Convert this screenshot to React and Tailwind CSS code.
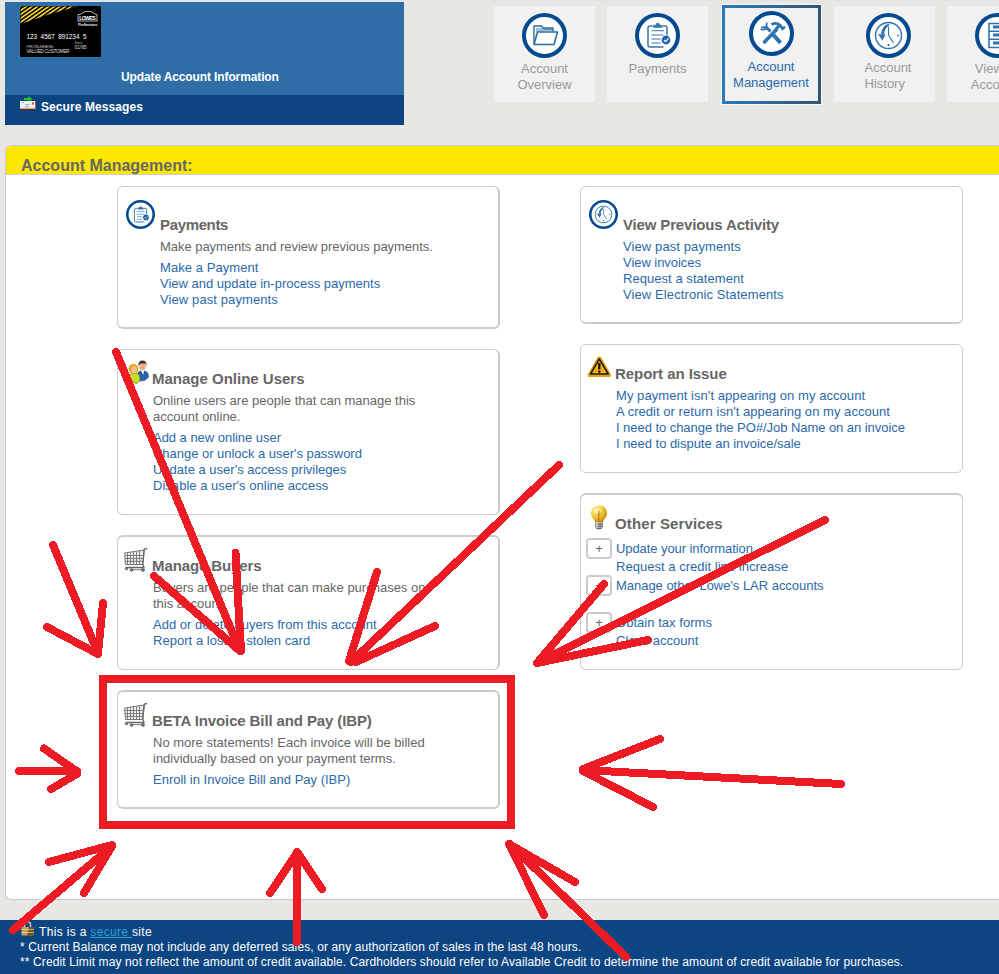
import React from 'react';
import clsx from 'clsx';

function CreditCardArt() {
  return (
    <svg width="81" height="51" viewBox="0 0 81 51" className="block font-['Liberation_Sans',Arial,sans-serif] font-normal tracking-normal">
      <defs>
        <pattern id="stripes" width="3.2" height="10" patternUnits="userSpaceOnUse" patternTransform="rotate(55)">
          <rect width="1.7" height="10" fill="#f0cf35" />
        </pattern>
      </defs>
      <rect width="81" height="51" rx="1.5" fill="#000" />
      <path d="M0.5 0.5H57L30 8L0.5 18z" fill="url(#stripes)" />
      <path d="M58 17.5V8.5h2l5-3h6l5 3h1v9z" fill="#000" stroke="#ddd" strokeWidth="0.8" />
      <text x="59.3" y="14" fontSize="5.2" fontWeight="700" fill="#fff" textLength="16.5">LOWE'S</text>
      <rect x="57" y="15.2" width="22" height="5.5" fill="#000" />
      <path d="M58 15h19" stroke="#ddd" strokeWidth="0.8" />
      <text x="58" y="19.6" fontSize="4.2" fontWeight="700" fill="#ddd" textLength="19.5">ProServices</text>
      <text x="6.500" y="32.800" fontSize="6.400" fill="#fff" xmlSpace="preserve" textLength="60">123  4567  891234  5</text>
      <text x="6.5" y="42" fontSize="4.4" fill="#bbb" textLength="27">PRO BUSINESS</text>
      <text x="54.5" y="38" fontSize="3.6" fill="#aaa" textLength="8">Since</text>
      <text x="54.5" y="43" fontSize="4.8" fill="#ddd" textLength="12">01/95</text>
      <text x="6.5" y="47" fontSize="4.8" fill="#ddd" textLength="43">VALUED CUSTOMER</text>
    </svg>
  );
}

function EnvelopeIcon() {
  return (
    <svg width="16" height="15" viewBox="0 0 16 15" className="block">
      <path d="M0 5h15v8H0z" fill="#eef0f2" />
      <path d="M0 13h16v1.5H0z" fill="#4d2b2b" />
      <path d="M0 11.8h15V13H0z" fill="#d8a9a0" />
      <path d="M15 5h1v9h-1z" fill="#7b6b6b" />
      <path d="M5 8.5h5M5 10.5h4M2 6.5h2" stroke="#9aa4b0" strokeWidth="0.8" />
      <path d="M12 6.5h2v2h-2z" fill="#e0452f" />
      <path d="M4 2h4V0l4.5 3L8 6V4H4z" fill="#23c523" />
    </svg>
  );
}

function Badge({ size, children }) {
  return (
    <svg width={size} height={size} viewBox="0 0 45 45" className="block shrink-0">
      <circle cx="22.5" cy="22.5" r="20.5" fill="#fff" stroke="#034a90" strokeWidth="4" />
      {children}
    </svg>
  );
}

function FolderGlyph() {
  return (
    <g fill="none" stroke="#2a6ea9" strokeWidth="1.4" strokeLinejoin="round">
      <path d="M12 31V13h7.500l1.500 2h10v3.500" />
      <path d="M12 31.500l3.500-12.500h20L32 31.500H12z" strokeWidth="1.600" />
      <path d="M14 16h16M14 18h6.500l1-1h10" strokeWidth="0.9" />
    </g>
  );
}

function ClipboardGlyph() {
  return (
    <g fill="none" stroke="#3476b0" strokeWidth="1.5">
      <path d="M28.500 34H15q-2 0-2-2V15q0-2 2-2h2.500M27.500 13h2.500q2 0 2 2v7" />
      <path d="M18.500 14.500v-2.300h2.400q.3-2.200 1.900-2.200t1.900 2.200h2.300v2.300z" fill="#3476b0" strokeWidth="0.6" />
      <path d="M16.500 17.700h12.500M16.500 22h12M16.500 26h9M16.500 30h9" strokeWidth="1" />
      <circle cx="31" cy="27" r="4.400" fill="#1f65a6" stroke="none" />
      <path d="M29 27l1.600 1.600 3-3.300" stroke="#fff" strokeWidth="1.100" />
    </g>
  );
}

function ToolsGlyph() {
  return (
    <g stroke="#2e73ae" fill="none">
      <path d="M17 16l4.500 4.500" strokeWidth="3" />
      <path d="M17.500 11.500q.8 3-.8 4.200-1.700 1-4.600.3M11.500 18q3 1.500 5.800-.5" strokeWidth="1.800" />
      <path d="M24.500 24l7 7.800" strokeWidth="4" />
      <path d="M28 18L14.500 32" strokeWidth="3.600" />
      <path d="M22.500 13.500q4.500-2.500 8.500.500l2.500 3.800 2.500-2" strokeWidth="2.600" />
      <path d="M30.500 14l-4 5" strokeWidth="3.200" />
    </g>
  );
}

function HistoryGlyph() {
  return (
    <g fill="none" stroke="#2e73ae">
      <circle cx="22.5" cy="22.5" r="13" strokeWidth="1.4" />
      <path d="M23.5 11.500q-6 1-7.800 9.500" strokeWidth="1.3" />
      <path d="M21 12.500q-4 3-4.200 9" strokeWidth="2.600" />
      <path d="M12 21.200h7.500l-3 6.200z" fill="#2e73ae" stroke="none" />
      <path d="M22.5 13.500v8.500l5 8" strokeWidth="1.1" />
      <path d="M31.200 22.500h1.800M22.500 31v2" strokeWidth="1.7" />
    </g>
  );
}

function CabinetGlyph() {
  return (
    <g fill="none" stroke="#2e73ae" strokeWidth="1.6">
      <path d="M14 10.5h17v24H14zM14 18.3h17M14 26.2h17" />
      <path d="M18 14h9M18 22h9M18 30h9" strokeWidth="3" />
    </g>
  );
}

function UsersIcon() {
  return (
    <svg width="22" height="24" viewBox="0 0 22 24" className="block">
      <path d="M10 20q-1-7 3-9h5q3.5 1 3.5 6l-3 3-5 1z" fill="#2763b5" stroke="#173b6e" strokeWidth="0.6" />
      <path d="M14 10l2 5 1.5-5z" fill="#fff" />
      <ellipse cx="15.5" cy="6" rx="3.3" ry="4.3" fill="#e8b184" />
      <path d="M11.5 6Q11 .5 15.5.5T19.5 6l-1-2.5h-5z" fill="#3e342f" />
      <path d="M2 22q-.5-8 4-9h4q3.5 2 3 7l-3 3.5z" fill="#c7dc28" stroke="#66751a" strokeWidth="0.6" />
      <circle cx="6.5" cy="9" r="5" fill="#e5a71d" />
      <ellipse cx="7" cy="9.7" rx="2.8" ry="3.4" fill="#f4c491" />
    </svg>
  );
}

function CartIcon() {
  return (
    <svg width="24" height="25" viewBox="0 0 24 25" className="block">
      <g fill="none" stroke="#666">
        <path d="M.6 6L19.800 3 18.800 17.500H1.500L.6 6z" fill="#eee" strokeWidth="0.9" />
        <path d="M3.500 6v11M6.500 5.500V17M9.500 5v12M12.500 4.500V17M15.500 4v13M1 8.500h18M1 11.500h18M1.500 14.400h17" strokeWidth="0.8" />
        <path d="M23.200 1.500l-2.800.5-1.600 15.200 1.200 3.300H3" strokeWidth="1.3" />
      </g>
      <g fill="#888" stroke="#444" strokeWidth="0.7">
        <circle cx="2.5" cy="21.5" r="1.300" />
        <circle cx="7.5" cy="23" r="1.300" />
        <circle cx="19" cy="23" r="1.400" />
        <path d="M8 22.700h10" />
      </g>
    </svg>
  );
}

function WarningIcon() {
  return (
    <svg width="25" height="22" viewBox="0 0 25 22" className="block">
      <path d="M12 .5q1.200-.5 2.200 1l9.800 17q.3 2.500-1.500 2.500H2Q0 20.500.7 18.500L10.500 1.500q.6-1 1.500-1z" fill="#dfa012" />
      <path d="M12.200 3L3.500 18h17.800z" fill="#eeb01d" stroke="#241c08" strokeWidth="1.500" strokeLinejoin="round" />
      <path d="M12.300 7v6.500" stroke="#111" strokeWidth="2.200" />
      <circle cx="12.300" cy="15.700" r="1.200" fill="#111" />
    </svg>
  );
}

function BulbIcon() {
  return (
    <svg width="18" height="25" viewBox="0 0 18 25" className="block">
      <defs>
        <radialGradient id="glow" cx="0.35" cy="0.3" r="0.75">
          <stop offset="0" stopColor="#fffbd0" />
          <stop offset="0.45" stopColor="#f6d23a" />
          <stop offset="1" stopColor="#c07f07" />
        </radialGradient>
      </defs>
      <path d="M9 .5q8 .5 8 8 0 3-2.500 5.500-1.500 1.500-1.500 3.500H5q0-2-1.500-3.500Q1 11.500 1 8.500 1 1 9 .5z" fill="url(#glow)" />
      <path d="M6.500 9l2 1.500.5 6M11 8.500l-2 2V6" fill="none" stroke="#9b680f" strokeWidth="0.800" />
      <path d="M5 17.500h8v4.500q-1 2.500-4 2.500T5 22z" fill="#aaa" />
      <path d="M5 19h8M5 21.200h8M6.500 23.500h5" stroke="#555" strokeWidth="0.800" />
      <path d="M7 17.500v5" stroke="#eee" strokeWidth="1.200" />
    </svg>
  );
}

function LockIcon() {
  return (
    <svg width="13" height="15" viewBox="0 0 13 15" className="block">
      <path d="M3.500 6.500V3.500Q3.500 1 6.500 1t3 2.500v3" fill="none" stroke="#bfc3c8" strokeWidth="1.500" />
      <path d="M.5 6h12v8.500H.5z" fill="#c3a052" />
      <path d="M8 6h4.500v8.500H6z" fill="#6f5320" />
      <path d="M.5 8.500h12M.5 11.500h12" stroke="#eed99d" strokeWidth="0.700" />
    </svg>
  );
}

const NAV = [
  { lines: ['Account', 'Overview'], glyph: <FolderGlyph /> },
  { lines: ['Payments'], glyph: <ClipboardGlyph />, className: 'mr-px' },
  { lines: ['Account', 'Management'], glyph: <ToolsGlyph />, active: true },
  { lines: ['Account', 'History'], glyph: <HistoryGlyph />, left: true, className: 'pl-[7px]' },
  { lines: ['View All', 'Accounts'], glyph: <CabinetGlyph /> },
];

function NavTile({ lines, glyph, active, left, className }) {
  const label = (
    <div className={clsx('leading-4', left ? 'mt-[2px] text-left' : 'mt-[3px] text-center')}>
      {lines.map((line) => (
        <div key={line} className="whitespace-nowrap">{line}</div>
      ))}
    </div>
  );

  if (active) {
    return (
      <div className="-mt-[2px] h-[101px] w-[101px] shrink-0 border border-[#f5f8fa] bg-gradient-to-r from-[#2b78bf] to-[#305672] p-[3px]">
        <div className="flex h-full flex-col items-center bg-[#f1f1f1] pt-[3px] pr-px text-[#2a69a8]">
          <Badge size={45}>{glyph}</Badge>
          {label}
        </div>
      </div>
    );
  }

  return (
    <div className={clsx('flex h-24 w-[101px] shrink-0 flex-col items-center bg-[#f1f1f1] pt-[7px] text-[#999]', className)}>
      <Badge size={45}>{glyph}</Badge>
      {label}
    </div>
  );
}

function Card({ title, titleClass, icon, iconClass, wide, className, children }) {
  return (
    <section className={clsx('flex w-[383px] rounded-md border-[#ccc] bg-white', className)}>
      <div className={clsx('shrink-0', wide ? 'w-[42px]' : 'w-[35px]', iconClass)}>{icon}</div>
      <div className={wide ? 'pt-[28px]' : 'pt-[19px]'}>
        <h2 className={clsx('mb-1 text-[15px] leading-5 font-bold', titleClass)}>{title}</h2>
        {children}
      </div>
    </section>
  );
}

function Links({ items, className }) {
  return (
    <ul className={clsx('text-[#2b69a9]', className)}>
      {items.map(({ label, tracking }) => (
        <li key={label} className={clsx('whitespace-nowrap', tracking)}>{label}</li>
      ))}
    </ul>
  );
}

function ServiceRow({ label, expandable, tracking }) {
  return (
    <div className={clsx('-ml-[30px] flex items-center', expandable ? 'h-[21px]' : 'h-4')}>
      {expandable ? (
        <span className="mr-1 flex h-[21px] w-[26px] items-center justify-center rounded border-2 border-[#ccc] text-[#666]">+</span>
      ) : (
        <span className="w-[30px]" />
      )}
      <span className={clsx('whitespace-nowrap text-[#2b69a9]', tracking)}>{label}</span>
    </div>
  );
}

// Hand-drawn red pen marks: each arrow is a shaft plus two barbs meeting at the tip
const ARROWS = [
  'M116 352L240 651M154 576L240 651M235.500 553L241 651',
  'M559 465L351 662M377 572L349 661M435 626L356 662',
  'M825 520L537 663M604 584L537 663M648 640L537 663',
  'M53 545L98 653M47 627L98 654M103 603L98 653',
  'M19 771H77M44 748.500L77 771.500M51 789L77 774',
  'M13 930L112 846M49 862L112 845M84 893L112 846',
  'M297 942V852M270 893L297 853M322 889L298 853',
  'M626 957L510 844M575 882L509 844M544 915L509 844',
  'M841 784L583 770M660 739L583 769M653 807L583 771',
];

function PenMarks() {
  return (
    <svg
      width="999"
      height="974"
      className="pointer-events-none absolute top-0 left-0"
      shapeRendering="crispEdges"
      fill="none"
      stroke="#ed1c24"
      strokeWidth="8"
    >
      <rect x="103" y="679" width="408" height="146" />
      {ARROWS.map((d) => (
        <path key={d} d={d} strokeLinecap="round" />
      ))}
    </svg>
  );
}

export default function App() {
  return (
    <div className="relative flex h-[974px] w-[999px] flex-col overflow-hidden bg-[#e8e7e3] font-['Liberation_Sans',Arial,sans-serif] text-[13px] leading-4 text-[#666]">
      <header className="flex h-[145px] shrink-0 border-t border-[#dce4e6] pl-[5px]">
        <div className="mt-px h-[123px] w-[399px] shrink-0 text-[12px] font-bold text-white">
          <div className="h-[93px] bg-[#2e6da6] pt-1 pl-[15px]">
            <CreditCardArt />
            <div className="mt-[12px] ml-[101px] tracking-[-0.12px]">Update Account Information</div>
          </div>
          <div className="flex h-[30px] bg-[#0d4583] pt-px pl-[15px]">
            <EnvelopeIcon />
            <div className="mt-[3px] ml-[5px] tracking-[0.08px]">Secure Messages</div>
          </div>
        </div>
        <nav className="ml-[90px] flex gap-3 pt-[5px]">
          {NAV.map((item) => (
            <NavTile key={item.lines.join(' ')} {...item} />
          ))}
        </nav>
      </header>

      <main className="ml-[5px] h-[755px] shrink-0 rounded-l-md border border-r-0 border-[#c8c9ca] bg-white">
        <h1 className="h-[29px] rounded-tl-[5px] border-b border-[#cbcfc5] bg-[#fce700] pt-[10px] pl-[15px] text-[16px] leading-5 font-bold">
          Account Management:
        </h1>
        <div className="flex gap-20 pt-[11px] pl-[111px]">
          <div className="flex flex-col">
            <Card
              wide
              title="Payments"
              titleClass="tracking-[-0.35px]"
              icon={<Badge size={29}><ClipboardGlyph /></Badge>}
              iconClass="pt-[13px] pl-2"
              className="h-[143px] border-t border-r-2 border-b-2 border-l"
            >
              <p className="tracking-[-0.04px]">Make payments and review previous payments.</p>
              <Links
                className="mt-[5px]"
                items={[
                  { label: 'Make a Payment', tracking: 'tracking-[0.07px]' },
                  { label: 'View and update in-process payments' },
                  { label: 'View past payments', tracking: 'tracking-[0.1px]' },
                ]}
              />
            </Card>
            <Card
              title="Manage Online Users"
              titleClass="-ml-px"
              icon={<UsersIcon />}
              iconClass="pt-[10px] pl-[9px]"
              className="mt-5 h-[166px] border-t border-r-2 border-b border-l"
            >
              <p className="w-[290px]">Online users are people that can manage this account online.</p>
              <Links
                className="mt-[5px]"
                items={[
                  { label: 'Add a new online user', tracking: 'tracking-[-0.03px]' },
                  { label: "Change or unlock a user's password", tracking: 'tracking-[-0.03px]' },
                  { label: "Update a user's access privileges" },
                  { label: "Disable a user's online access", tracking: 'tracking-[0.03px]' },
                ]}
              />
            </Card>
            <Card
              title="Manage Buyers"
              titleClass="-ml-px tracking-[-0.1px]"
              icon={<CartIcon />}
              iconClass="pt-[10px] pl-[6px]"
              className="mt-5 h-[135px] border-t-2 border-r-2 border-b border-l"
            >
              <p className="w-[290px]">Buyers are people that can make purchases on this account.</p>
              <Links
                className="mt-[5px]"
                items={[
                  { label: 'Add or delete buyers from this account', tracking: 'tracking-[0.03px]' },
                  { label: 'Report a lost or stolen card', tracking: 'tracking-[0.04px]' },
                ]}
              />
            </Card>
            <Card
              title="BETA Invoice Bill and Pay (IBP)"
              titleClass="-ml-px tracking-[-0.12px]"
              icon={<CartIcon />}
              iconClass="pt-[10px] pl-[6px]"
              className="mt-5 h-[119px] border-t-2 border-r-2 border-b-2 border-l"
            >
              <p className="w-[290px]">No more statements! Each invoice will be billed individually based on your payment terms.</p>
              <Links className="mt-[5px]" items={[{ label: 'Enroll in Invoice Bill and Pay (IBP)' }]} />
            </Card>
          </div>

          <div className="flex flex-col">
            <Card
              wide
              title="View Previous Activity"
              titleClass="tracking-[-0.15px]"
              icon={<Badge size={29}><HistoryGlyph /></Badge>}
              iconClass="pt-[13px] pl-2"
              className="h-[138px] border border-b-2"
            >
              <Links
                items={[
                  { label: 'View past payments', tracking: 'tracking-[0.1px]' },
                  { label: 'View invoices', tracking: 'tracking-[-0.05px]' },
                  { label: 'Request a statement', tracking: 'tracking-[0.05px]' },
                  { label: 'View Electronic Statements', tracking: 'tracking-[0.1px]' },
                ]}
              />
            </Card>
            <Card
              title="Report an Issue"
              titleClass="-ml-px tracking-[-0.05px]"
              icon={<WarningIcon />}
              iconClass="pt-[11px] pl-[6px]"
              className="mt-5 h-[129px] border"
            >
              <Links
                items={[
                  { label: "My payment isn't appearing on my account", tracking: 'tracking-[0.06px]' },
                  { label: "A credit or return isn't appearing on my account", tracking: 'tracking-[0.04px]' },
                  { label: 'I need to change the PO#/Job Name on an invoice', tracking: 'tracking-[-0.05px]' },
                  { label: 'I need to dispute an invoice/sale', tracking: 'tracking-[-0.03px]' },
                ]}
              />
            </Card>
            <Card
              title="Other Services"
              titleClass="-ml-px tracking-[0.13px]"
              icon={<BulbIcon />}
              iconClass="pt-[10px] pl-[9px]"
              className="mt-5 h-[177px] border border-t-2"
            >
              <ServiceRow expandable label="Update your information" tracking="tracking-[-0.08px]" />
              <ServiceRow label="Request a credit line increase" tracking="tracking-[0.03px]" />
              <ServiceRow expandable label="Manage other Lowe's LAR accounts" tracking="tracking-[-0.03px]" />
              <div className="h-4" />
              <ServiceRow expandable label="Obtain tax forms" tracking="tracking-[0.04px]" />
              <ServiceRow label="Close account" />
            </Card>
          </div>
        </div>
      </main>

      <footer className="mt-5 h-[54px] shrink-0 bg-[#0d4583] pt-[5px] pl-5 text-[12px] leading-[15px] text-white">
        <div className="flex">
          <span className="-mt-[4px] mr-[5px] ml-px h-[15px]"><LockIcon /></span>
          <span className="tracking-[0.33px]">This is a <span className="whitespace-pre text-[#309fd8] underline">secure </span>site</span>
        </div>
        <div className="tracking-[0.118px] whitespace-nowrap">
          * Current Balance may not include any deferred sales, or any authorization of sales in the last 48 hours.
        </div>
        <div className="tracking-[0.118px] whitespace-nowrap">
          ** Credit Limit may not reflect the amount of credit available. Cardholders should refer to Available Credit to determine the amount of credit available for purchases.
        </div>
      </footer>

      <PenMarks />
    </div>
  );
}
